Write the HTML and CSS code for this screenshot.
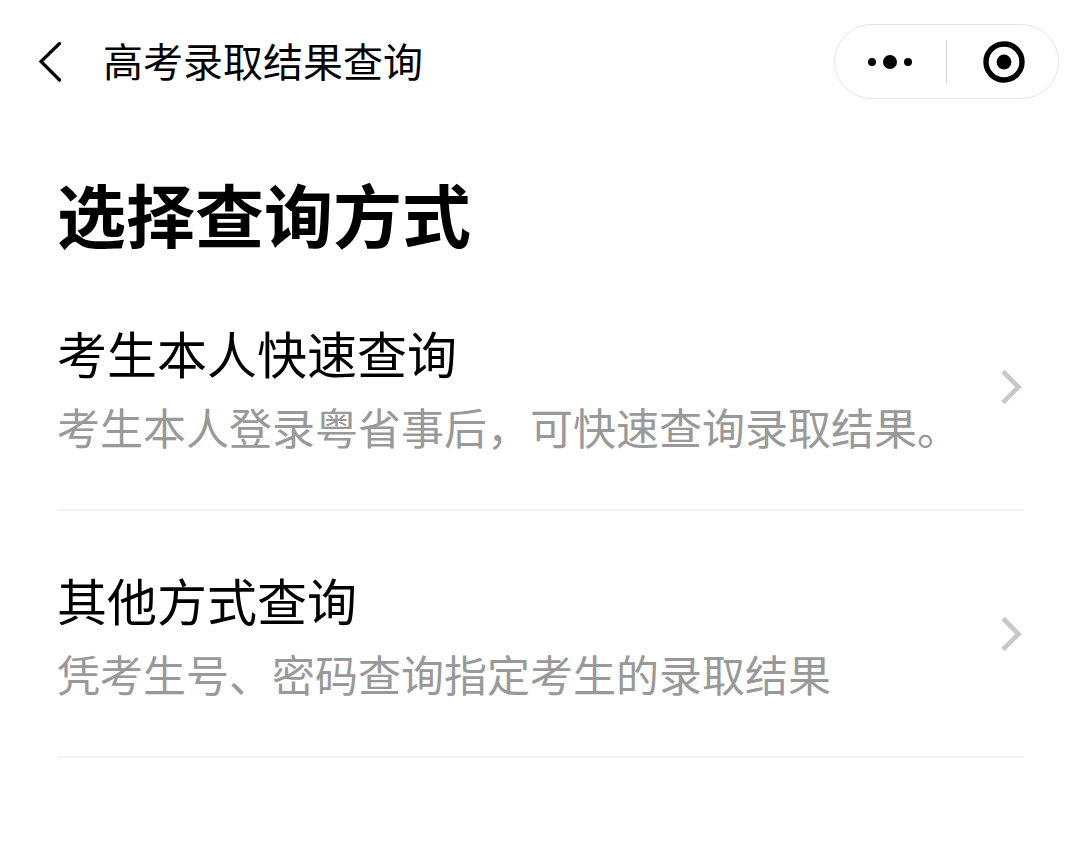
FILE: index.html
```html
<!DOCTYPE html>
<html lang="zh-CN">
<head>
    <meta charset="UTF-8">
    <meta name="viewport" content="width=device-width, initial-scale=1.0">
    <title>高考录取结果查询</title>
    <link rel="stylesheet" href="styles.css">
</head>
<body>
    <header class="navbar">
        <button class="back" type="button" aria-label="返回">
            <svg width="24" height="40" viewBox="0 0 24 40"><path d="M21.5 1.5 L3 19.5 L21.5 38" fill="none" stroke="#000" stroke-width="3.2" stroke-linecap="round"/></svg>
        </button>
        <div class="nav-title">高考录取结果查询</div>
        <div class="capsule">
            <button class="capsule-btn more" type="button" aria-label="更多">
                <svg width="46" height="42" viewBox="0 0 46 42"><circle cx="5" cy="21" r="4"/><circle cx="23" cy="21" r="7"/><circle cx="41" cy="21" r="4"/></svg>
            </button>
            <span class="capsule-line"></span>
            <button class="capsule-btn close" type="button" aria-label="关闭">
                <svg width="42" height="42" viewBox="0 0 42 42"><circle cx="21" cy="21" r="18" fill="none" stroke="#000" stroke-width="5.4"/><circle cx="21" cy="21" r="7.4"/></svg>
            </button>
        </div>
    </header>
    <main class="container">
        <h1>选择查询方式</h1>
        <a class="item" href="#quick">
            <div class="item-text">
                <div class="item-title">考生本人快速查询</div>
                <div class="item-desc">考生本人登录粤省事后，可快速查询录取结果。</div>
            </div>
            <svg class="arrow" width="24" height="36" viewBox="0 0 24 36"><path d="M3 3.5 L18.5 19 L3 34.5" fill="none" stroke="#c8c8ca" stroke-width="4.6"/></svg>
        </a>
        <a class="item" href="#other">
            <div class="item-text">
                <div class="item-title">其他方式查询</div>
                <div class="item-desc">凭考生号、密码查询指定考生的录取结果</div>
            </div>
            <svg class="arrow" width="24" height="36" viewBox="0 0 24 36"><path d="M3 3.5 L18.5 19 L3 34.5" fill="none" stroke="#c8c8ca" stroke-width="4.6"/></svg>
        </a>
    </main>
</body>
</html>
```

FILE: styles.css
```css
body {
    font-family: "Noto Sans CJK SC", sans-serif;
    background-color: #fff;
    color: #000;
    margin: 0;
    padding: 0;
}

button {
    padding: 0;
    border: none;
    background: none;
    cursor: pointer;
}

svg {
    display: block;
    flex-shrink: 0;
}

.navbar {
    display: flex;
    align-items: center;
    padding: 24px 21px 24px 38px;
}

.nav-title {
    flex: 1;
    margin-left: 41px;
    padding-bottom: 4px;
    font-size: 40px;
    line-height: 60px;
}

.capsule {
    display: flex;
    align-items: center;
    box-sizing: border-box;
    width: 225px;
    height: 75px;
    border: 1px solid #e5e5e5;
    border-radius: 38px;
}

.capsule-btn {
    flex: 1;
    display: flex;
    justify-content: center;
}

.more {
    margin-right: 2px;
    margin-left: 0;
}

.close {
    margin-left: 2px;
}

.capsule-line {
    width: 1px;
    height: 44px;
    background: #d8d8d8;
}

.container {
    padding: 40px 56px 0 57px;
}

h1 {
    margin: 0;
    font-size: 69px;
    line-height: 101px;
    font-weight: bold;
}

.item {
    display: flex;
    align-items: center;
    justify-content: space-between;
    padding: 49px 0 51px;
    border-bottom: 2px solid #f2f2f2;
    color: #000;
    text-decoration: none;
}

.item-title {
    margin-bottom: 3px;
    font-size: 50px;
    line-height: 78px;
}

.item-desc {
    font-size: 43px;
    line-height: 64px;
    color: #999;
}
```
